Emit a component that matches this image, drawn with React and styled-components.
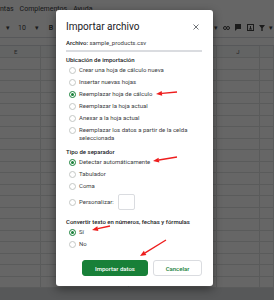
import React from 'react';
import styled, { createGlobalStyle } from 'styled-components';

const GlobalStyle = createGlobalStyle`
  html, body {
    margin: 0;
    padding: 0;
  }
  body {
    width: 274px;
    height: 300px;
    overflow: hidden;
    font-family: Roboto, 'Liberation Sans', Arial, sans-serif;
  }
`;

const Page = styled.div`
  position: relative;
  width: 274px;
  height: 300px;
  overflow: hidden;
  background: #fff;
  display: flex;
  flex-direction: column;
`;

/* hoja de cálculo de fondo */
const MenuBar = styled.div`
  height: 18px;
  display: flex;
  align-items: center;
  gap: 6px;
  font-size: 7px;
  color: #3c4043;
  flex-shrink: 0;
`;

const Toolbar = styled.div`
  height: 20px;
  display: flex;
  align-items: center;
  border-bottom: 1px solid #dadce0;
  box-sizing: border-box;
  color: #444;
  font-size: 7px;
  flex-shrink: 0;
`;

const ToolSlot = styled.span`
  width: ${(p) => p.$w}px;
  display: flex;
  justify-content: center;
  align-items: center;
`;

const Spacer = styled.div`
  flex: 1;
`;

const FormulaBar = styled.div`
  height: 7px;
  border-bottom: 1px solid #dadce0;
  flex-shrink: 0;
`;

const GridRow = styled.div`
  display: flex;
  height: ${(p) => (p.$header ? 12 : 11.5)}px;
  background: ${(p) => (p.$header ? '#f8f9fa' : '#fff')};
  border-bottom: 1px solid #e2e3e3;
  box-sizing: border-box;
  flex-shrink: 0;
`;

const Cell = styled.div`
  width: ${(p) => p.$w}px;
  flex-shrink: 0;
  border-right: 1px solid #e2e3e3;
  box-sizing: border-box;
  font-size: 6px;
  color: #5f6368;
  display: flex;
  align-items: center;
  justify-content: ${(p) => (p.$left ? 'flex-start' : 'center')};
  padding-left: ${(p) => (p.$left ? 14 : 0)}px;
`;

const Rows = styled.div`
  flex: 1;
  overflow: hidden;
`;

const TabBar = styled.div`
  height: 12px;
  background: #d9dbde;
  flex-shrink: 0;
`;

/* modal */
const Overlay = styled.div`
  position: absolute;
  inset: 0;
  background: rgba(0, 0, 0, 0.6);
  display: flex;
  align-items: flex-start;
  padding: 10px 0 0 56px;
  box-sizing: border-box;
`;

const Dialog = styled.div`
  width: 157px;
  height: 276px;
  box-sizing: border-box;
  background: #fff;
  border-radius: 3px;
  box-shadow: 0 3px 10px rgba(0, 0, 0, 0.45);
  padding: 11px 11px 10px 10px;
  display: flex;
  flex-direction: column;
  color: #3c4043;
`;

const TitleRow = styled.div`
  height: 12px;
  display: flex;
  align-items: center;
  justify-content: space-between;
`;

const Title = styled.h1`
  margin: 0;
  font-size: 10px;
  line-height: 12px;
  font-weight: 400;
  color: #202124;
`;

const CloseIcon = styled.svg`
  width: 6px;
  height: 6px;
  margin-right: 3px;
`;

const FileField = styled.div`
  margin-top: 6px;
  font-size: 6px;
  line-height: 8px;
  padding-bottom: 3px;
  border-bottom: 2px solid #dadce0;
  b {
    font-weight: 500;
    color: #202124;
  }
`;

const SectionLabel = styled.div`
  margin-top: ${(p) => p.$top}px;
  font-size: 6px;
  line-height: 8px;
  font-weight: 500;
  color: #202124;
`;

const RadioRow = styled.label`
  display: flex;
  align-items: ${(p) => (p.$center ? 'center' : 'flex-start')};
  padding: 2px 0 2px 3px;
  gap: 3px;
  font-size: 6px;
  line-height: 8px;
`;

const Radio = styled.span`
  position: relative;
  width: 7px;
  height: 7px;
  margin-top: 0.5px;
  flex-shrink: 0;
  border-radius: 50%;
  box-sizing: border-box;
  border: 1px solid ${(p) => (p.$checked ? '#188038' : '#c4c7c5')};
  &::after {
    content: '';
    display: ${(p) => (p.$checked ? 'block' : 'none')};
    position: absolute;
    top: 1px;
    left: 1px;
    width: 3px;
    height: 3px;
    border-radius: 50%;
    background: #188038;
  }
`;

const CustomInput = styled.span`
  width: 17px;
  height: 16px;
  margin-left: 1px;
  border: 1px solid #dadce0;
  border-radius: 2px;
  box-sizing: border-box;
`;

const ButtonRow = styled.div`
  margin-top: 10px;
  display: flex;
  justify-content: flex-end;
  gap: 5px;
`;

const Button = styled.button`
  width: ${(p) => (p.$primary ? 66 : 49)}px;
  height: 16px;
  padding: 0;
  font-family: inherit;
  font-size: 6px;
  font-weight: 500;
  border-radius: 3px;
  border: 1px solid ${(p) => (p.$primary ? '#188038' : '#dadce0')};
  background: ${(p) => (p.$primary ? '#188038' : '#fff')};
  color: ${(p) => (p.$primary ? '#fff' : '#188038')};
`;

const Annotations = styled.svg`
  position: absolute;
  top: 0;
  left: 0;
  width: 274px;
  height: 300px;
  pointer-events: none;
`;

const cols = [41, 88, 88, 43, 14];

const Arrow = ({ x1, y1, x2, y2 }) => {
  const a = Math.atan2(y2 - y1, x2 - x1);
  const len = 6;
  const half = 2.4;
  const bx = x2 - len * Math.cos(a);
  const by = y2 - len * Math.sin(a);
  const px = -Math.sin(a) * half;
  const py = Math.cos(a) * half;
  return (
    <g>
      <line x1={x1} y1={y1} x2={bx} y2={by} stroke="#ee1d1d" strokeWidth="1.3" />
      <polygon
        points={`${x2},${y2} ${bx + px},${by + py} ${bx - px},${by - py}`}
        fill="#ee1d1d"
      />
    </g>
  );
};

const ubicaciones = [
  'Crear una hoja de cálculo nueva',
  'Insertar nuevas hojas',
  'Reemplazar hoja de cálculo',
  'Reemplazar la hoja actual',
  'Anexar a la hoja actual',
  'Reemplazar los datos a partir de la celda seleccionada',
];

const App = () => {
  return (
    <>
      <GlobalStyle />
      <Page>
        <MenuBar>
          <span>ntas</span>
          <span>Complementos</span>
          <span>Ayuda</span>
        </MenuBar>
        <Toolbar>
          <ToolSlot $w={16}>▾</ToolSlot>
          <ToolSlot $w={12}>10</ToolSlot>
          <ToolSlot $w={18}>▾</ToolSlot>
          <ToolSlot $w={10}>
            <b>B</b>
          </ToolSlot>
          <Spacer />
          <ToolSlot $w={8}>▾</ToolSlot>
          <ToolSlot $w={12}>
            <svg width="7" height="4" viewBox="0 0 7 4">
              <rect x="0.5" y="0.5" width="3" height="3" rx="1.5" fill="none" stroke="#444" />
              <rect x="3.5" y="0.5" width="3" height="3" rx="1.5" fill="none" stroke="#444" />
            </svg>
          </ToolSlot>
          <ToolSlot $w={12}>
            <svg width="6" height="7" viewBox="0 0 6 7">
              <path d="M0 0h6v5H2L0 7z" fill="#444" />
            </svg>
          </ToolSlot>
          <ToolSlot $w={12}>
            <svg width="7" height="7" viewBox="0 0 7 7">
              <rect x="0.5" y="0.5" width="6" height="6" fill="none" stroke="#444" />
              <path d="M3.5 2v3M2 5h3" stroke="#444" />
            </svg>
          </ToolSlot>
          <ToolSlot $w={12}>
            <svg width="6" height="6" viewBox="0 0 6 6">
              <path d="M0 0h6L3.7 3v3H2.3V3z" fill="#444" />
            </svg>
          </ToolSlot>
          <ToolSlot $w={6}>▾</ToolSlot>
        </Toolbar>
        <FormulaBar />
        <GridRow $header>
          {cols.map((w, i) => (
            <Cell key={i} $w={w} $left={i === 0}>
              {i === 0 ? 'E' : i === 3 ? 'J' : ''}
            </Cell>
          ))}
        </GridRow>
        <Rows>
          {Array.from({ length: 21 }).map((_, r) => (
            <GridRow key={r}>
              {cols.map((w, i) => (
                <Cell key={i} $w={w} />
              ))}
            </GridRow>
          ))}
        </Rows>
        <TabBar />

        <Overlay>
          <Dialog>
            <TitleRow>
              <Title>Importar archivo</Title>
              <CloseIcon viewBox="0 0 6 6">
                <path d="M0.5 0.5l5 5M5.5 0.5l-5 5" stroke="#5f6368" strokeWidth="0.9" />
              </CloseIcon>
            </TitleRow>
            <FileField>
              <b>Archivo:</b> sample_products.csv
            </FileField>

            <SectionLabel $top={4}>Ubicación de importación</SectionLabel>
            {ubicaciones.map((t, i) => (
              <RadioRow key={t}>
                <Radio $checked={i === 2} />
                <span>{t}</span>
              </RadioRow>
            ))}

            <SectionLabel $top={4}>Tipo de separador</SectionLabel>
            <RadioRow>
              <Radio $checked />
              <span>Detectar automáticamente</span>
            </RadioRow>
            <RadioRow>
              <Radio />
              <span>Tabulador</span>
            </RadioRow>
            <RadioRow>
              <Radio />
              <span>Coma</span>
            </RadioRow>
            <RadioRow $center>
              <Radio />
              <span>Personalizar:</span>
              <CustomInput />
            </RadioRow>

            <SectionLabel $top={6}>Convertir texto en números, fechas y fórmulas</SectionLabel>
            <RadioRow>
              <Radio $checked />
              <span>Sí</span>
            </RadioRow>
            <RadioRow>
              <Radio />
              <span>No</span>
            </RadioRow>

            <ButtonRow>
              <Button $primary type="button">
                Importar datos
              </Button>
              <Button type="button">Cancelar</Button>
            </ButtonRow>
          </Dialog>
        </Overlay>

        <Annotations viewBox="0 0 274 300">
          <Arrow x1={177} y1={92} x2={156} y2={94} />
          <Arrow x1={177} y1={157} x2={153} y2={161} />
          <Arrow x1={110} y1={226} x2={92} y2={230} />
          <Arrow x1={166} y1={240} x2={140} y2={256} />
        </Annotations>
      </Page>
    </>
  );
};

export default App;
